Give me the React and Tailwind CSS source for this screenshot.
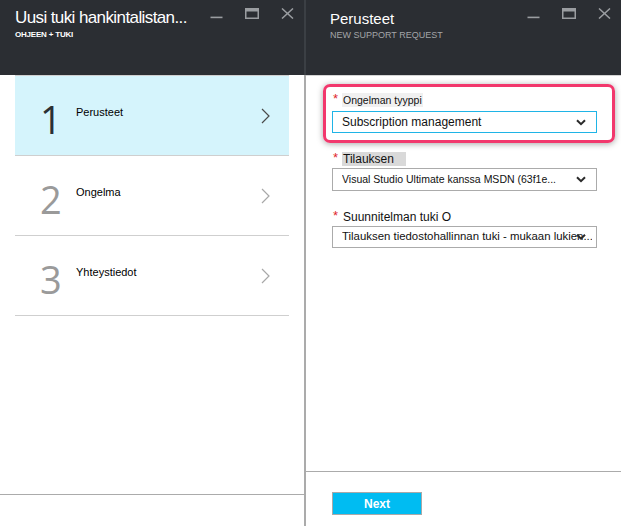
import React from "react";

const F = { fontFamily: '"Liberation Sans", Arial, sans-serif' };

function WinControls() {
  return (
    <div className="flex items-start gap-[22px] pt-[8px] pr-[10px] text-[#9a9da1]">
      <svg width="13" height="11" viewBox="0 0 13 11">
        <rect x="0.5" y="8.6" width="12" height="1.6" fill="currentColor" />
      </svg>
      <svg width="14" height="11" viewBox="0 0 14 11">
        <rect x="0.75" y="0.75" width="12.5" height="9.5" fill="none" stroke="currentColor" strokeWidth="1.5" />
        <rect x="0.5" y="0.5" width="13" height="3" fill="currentColor" />
      </svg>
      <svg width="13" height="11" viewBox="0 0 13 11">
        <path d="M1 0.5 L12 10.5 M12 0.5 L1 10.5" stroke="currentColor" strokeWidth="1.5" fill="none" />
      </svg>
    </div>
  );
}

function Chevron({ color }) {
  return (
    <svg width="9" height="16" viewBox="0 0 9 16" className="shrink-0">
      <path d="M1 1 L8 8 L1 15" fill="none" stroke={color} strokeWidth="1.2" />
    </svg>
  );
}

function DropChevron() {
  return (
    <svg width="10" height="7" viewBox="0 0 10 7" className="shrink-0">
      <path d="M1 1.2 L5 5.2 L9 1.2" fill="none" stroke="#2b2b2b" strokeWidth="2" />
    </svg>
  );
}

function Step({ n, label, active }) {
  return (
    <li
      className={`flex items-center h-[80px] border-b border-[#cfcfcf] pl-[25px] pr-[19px] ${
        active ? "bg-[#d5f4fc]" : "bg-white"
      }`}
    >
      <span
        className={`w-[36px] text-[38px] leading-none font-normal mt-[6px] ${
          active ? "text-[#2b2f33]" : "text-[#9a9a9a]"
        }`}
        style={{ fontFamily: '"Open Sans", sans-serif' }}
      >
        {n}
      </span>
      <span className="flex-1 text-[11px] text-black -mt-[6px]">{label}</span>
      <Chevron color={active ? "#4a4a4a" : "#a8a8a8"} />
    </li>
  );
}

function Label({ children, bg }) {
  return (
    <div className="flex items-start h-[14px] leading-[14px]">
      <span className="text-[#e0262b] text-[13px] leading-[12px] w-[10px] pl-[1px]">*</span>
      <span className={`${bg} px-[1px]`}>{children}</span>
    </div>
  );
}

function Select({ text, h, border, size, clip }) {
  return (
    <div
      className={`relative flex items-center w-[265px] ${h} border ${border} bg-white pl-[9px] ${clip ? "pr-[4px]" : "pr-[10px]"}`}
    >
      <span className={`flex-1 ${size} text-[#111] whitespace-nowrap overflow-hidden ${clip ? "" : "text-ellipsis"}`}>
        {text}
      </span>
      {clip ? (
        <span className="absolute right-[10px] top-1/2 -translate-y-1/2 flex">
          <DropChevron />
        </span>
      ) : (
        <DropChevron />
      )}
    </div>
  );
}

export default function App() {
  return (
    <div className="flex w-[621px] h-[526px] bg-white overflow-hidden" style={F}>
      {/* Left blade */}
      <div className="w-[304px] flex flex-col">
        <div className="h-[75px] bg-[#2b2e33] flex justify-between">
          <div className="pl-[15px] pt-[7px]">
            <div className="text-white text-[17px] leading-[22px] tracking-[-0.6px]">
              Uusi tuki hankintalistan...
            </div>
            <div className="text-white text-[8px] font-bold leading-[10px] mt-[1px] tracking-[-0.2px]">
              OHJEEN + TUKI
            </div>
          </div>
          <WinControls />
        </div>
        <ul className="mx-[15px] border-t border-[#cfcfcf]">
          <Step n="1" label="Perusteet" active />
          <Step n="2" label="Ongelma" />
          <Step n="3" label="Yhteystiedot" />
        </ul>
        <div className="flex-1" />
        <div className="h-[1px] bg-[#ababab]" />
        <div className="h-[31px]" />
      </div>

      {/* Divider */}
      <div className="w-[2px] flex flex-col">
        <div className="h-[75px] bg-[#3b3f44]" />
        <div className="flex-1 bg-[#ababab]" />
      </div>

      {/* Right blade */}
      <div className="flex-1 flex flex-col">
        <div className="h-[75px] bg-[#2b2e33] flex justify-between">
          <div className="pl-[24px] pt-[9px]">
            <div className="text-white text-[15px] leading-[20px]">Perusteet</div>
            <div className="text-[#a3a5a8] text-[9px] leading-[11px] mt-[1px]">NEW SUPPORT REQUEST</div>
          </div>
          <WinControls />
        </div>
        <div className="h-[1px] bg-[#d4d4d4]" />
        <div className="flex-1 flex flex-col">
          <div className="mt-[8px] ml-[17px] w-[292px] border-[3px] border-[#f2386d] rounded-[7px] shadow-[0_1px_6px_rgba(0,0,0,0.35)] pl-[6px] pt-[6px] pb-[7px]">
            <div className="text-[10.5px] text-[#111] mb-[4px]">
              <Label bg="bg-[#f0f0f0]">Ongelman tyyppi</Label>
            </div>
            <Select text="Subscription management" h="h-[22px]" border="border-[#1fb4e6]" size="text-[12px]" />
          </div>

          <div className="ml-[26px] mt-[9px] text-[12px] text-[#111]">
            <Label bg="bg-[#d9d9d9] pr-[12px]">Tilauksen</Label>
            <div className="mt-[2px]">
              <Select
                text="Visual Studio Ultimate kanssa MSDN (63f1e..."
                h="h-[23px]"
                border="border-[#ababab]"
                size="text-[10.5px]"
              />
            </div>
          </div>

          <div className="ml-[26px] mt-[19px] text-[12px] text-[#111]">
            <Label bg="">Suunnitelman tuki O</Label>
            <div className="mt-[2px]">
              <Select
                text="Tilauksen tiedostohallinnan tuki - mukaan lukien..."
                h="h-[22px]"
                border="border-[#ababab]"
                size="text-[11.4px]"
                clip
              />
            </div>
          </div>
        </div>
        <div className="h-[1px] bg-[#ababab]" />
        <div className="h-[54px] pl-[26px] pt-[20px]">
          <button className="w-[90px] h-[23px] bg-[#00bcf2] border border-[#a9a9a9] text-white text-[12px] font-bold flex items-center justify-center">
            Next
          </button>
        </div>
      </div>
    </div>
  );
}
